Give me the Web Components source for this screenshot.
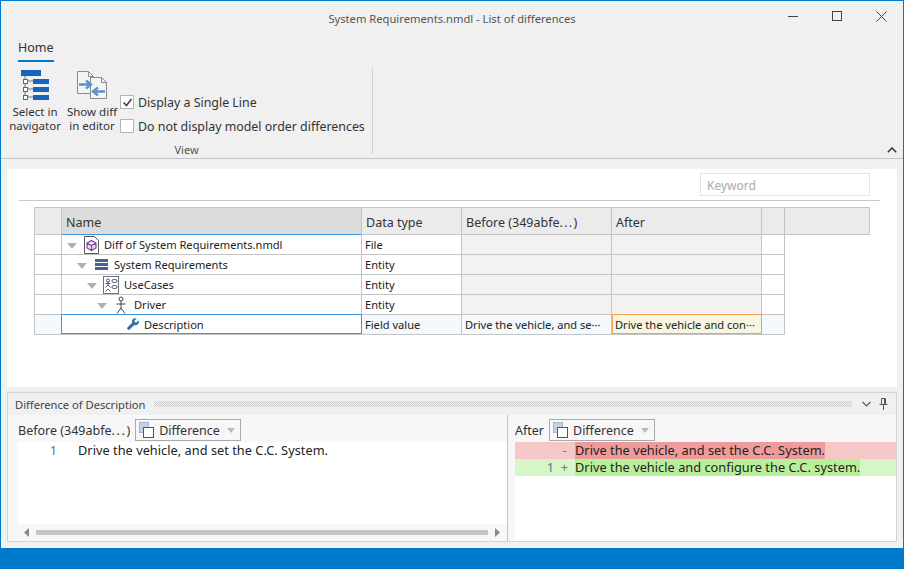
<!DOCTYPE html>
<html><head><meta charset="utf-8"><style>
html,body{margin:0;padding:0;background:#f0f0f0}
body{font-family:"Noto Sans","DejaVu Sans",sans-serif;font-size:12px;color:#222;width:904px;height:569px;overflow:hidden}
</style></head><body>
<app-window></app-window>
<script>
function el(name,html,css){
  customElements.define(name,class extends HTMLElement{
    connectedCallback(){ if(this.shadowRoot)return; const r=this.attachShadow({mode:'open'});
      r.innerHTML='<style>'+css+'</style>'+(typeof html==='function'?html(this):html);}
  });
}
const ICONS={
 file:`<svg width="15" height="18" viewBox="0 0 15 18"><path d="M.5.500h10l4 4v13H.5z" fill="#fff" stroke="#555"/><path d="M7.500 4.500l4.500 2.500v5l-4.500 2.500L3 12V7zM3 7l4.500 2.500L12 7M7.500 9.500v5" fill="#e9dff0" stroke="#7b3fa0" stroke-width="1.200"/></svg>`,
 sys:`<svg width="13" height="11" viewBox="0 0 13 11"><path d="M0 0h13v3H0zM0 4h13v3H0zM0 8h13v3H0z" fill="#4a6285"/></svg>`,
 uc:`<svg width="16" height="18" viewBox="0 0 16 18"><rect x=".5" y=".5" width="15" height="17" fill="#fff" stroke="#5f7590"/><g fill="none" stroke="#445" stroke-width=".9"><circle cx="5" cy="4.500" r="1.500"/><path d="M5 6v3M2.500 7.500h5M5 9l-2.500 2.500M5 9l2.500 2.500"/><path d="M2.500 15.500L5 13l2.500 2.500"/><ellipse cx="11.500" cy="5" rx="2.700" ry="1.600"/><ellipse cx="11.500" cy="11" rx="2.700" ry="1.600"/></g></svg>`,
 actor:`<svg width="10" height="18" viewBox="0 0 10 18"><g fill="none" stroke="#444"><circle cx="5" cy="3" r="2"/><path d="M5 5v7M.5 8h9M5 12l-4 5.500M5 12l4 5.500"/></g></svg>`,
 wrench:`<svg width="12" height="12" viewBox="0 0 12 12"><path d="M11.500 2.300L9.300 4.400 7.700 4.200 7.500 2.600 9.700.5C8.200-.2 6.400.2 5.500 1.500c-.7 1-.8 2.200-.3 3.200L.6 9.300c-.6.600-.6 1.400-.1 1.900l.3.300c.5.500 1.300.5 1.900 0l4.600-4.600c1.100.5 2.300.4 3.300-.3 1.200-.9 1.600-2.800.9-4.300z" fill="#3a6ea8"/></svg>`,
 copy:`<svg width="15" height="16" viewBox="0 0 15 16"><rect x=".5" y=".5" width="9" height="10" fill="#c5d2e6" stroke="#a8b6cc"/><rect x="4.500" y="5.500" width="10" height="10" fill="#fff" stroke="#555"/></svg>`
};

el('title-bar',`<span class="t">System Requirements.nmdl - List of differences</span>
<span class="b"><svg width="11" height="11" viewBox="0 0 11 11"><path d="M0 5.500h10" stroke="#444"/></svg></span>
<span class="b"><svg width="11" height="11" viewBox="0 0 11 11"><rect x=".5" y=".5" width="9" height="9" fill="none" stroke="#444"/></svg></span>
<span class="b"><svg width="11" height="11" viewBox="0 0 11 11"><path d="M.5.500l10 10M10.500.500l-10 10" stroke="#444"/></svg></span>`,
`:host{display:flex;align-items:center;height:35px;color:#555;flex:none}
.t{flex:1;text-align:center;font-size:11.200px;margin-right:-132px;margin-top:-1px}
.b{width:44px;display:flex;justify-content:center;align-items:center;margin-top:-4px}`);

el('ribbon-button',h=>`<slot name="i"></slot><span><slot></slot></span>`,
`:host{display:flex;flex-direction:column;align-items:center;line-height:14px;text-align:center;font-size:11.500px;color:#333;padding-top:3px}
span{display:block;margin-top:3px}`);

el('ribbon-check',h=>`<span class="c">${h.hasAttribute('checked')?'<svg width="11" height="11" viewBox="0 0 11 11"><path d="M1.500 5.500l3 3 5-6.500" fill="none" stroke="#444" stroke-width="1.700"/></svg>':''}</span><slot></slot>`,
`:host{display:flex;align-items:center;gap:4px;height:24px;font-size:12.400px;color:#333;white-space:nowrap}
.c{width:12px;height:12px;background:#fff;border:1px solid #b5b5b5;display:flex;align-items:center;justify-content:center}`);

el('app-ribbon',`<div class="tab"><span>Home</span></div>
<div class="body"><div class="group"><div class="items">
<ribbon-button><svg slot="i" width="30" height="32" viewBox="0 0 30 32"><path d="M1 0h20v6H1z" fill="#1565c0"/><path d="M5 6v21M5 11h8M5 19h8M5 27h8" stroke="#777" fill="none"/><g fill="#fff" stroke="#666"><rect x="3.500" y="9.500" width="4" height="4"/><rect x="3.500" y="17.500" width="4" height="4"/><rect x="3.500" y="25.500" width="4" height="4"/></g><path d="M13 9h16v5H13zM13 17h16v5H13zM13 25h16v5H13z" fill="#1565c0"/></svg>Select in<br>navigator</ribbon-button>
<ribbon-button class="second"><svg slot="i" width="30" height="32" viewBox="0 0 30 32"><path d="M.5 1.500h11l5 5v17H.5z" fill="#f4f4f4" stroke="#8c8c8c"/><path d="M11.500 1.500v5h5" fill="none" stroke="#8c8c8c"/><path d="M13.500 7.500h11l5 5v16h-16z" fill="#f4f4f4" stroke="#8c8c8c"/><path d="M24.500 7.500v5h5" fill="none" stroke="#8c8c8c"/><path d="M2 14.500h11M9 10.500l5 4-5 4" fill="none" stroke="#5b93c9" stroke-width="2.400"/><path d="M28 21.500H17M21 17.500l-5 4 5 4" fill="none" stroke="#5b93c9" stroke-width="2.400"/></svg>Show diff<br>in editor</ribbon-button>
<div class="checks"><ribbon-check checked>Display a Single Line</ribbon-check><ribbon-check>Do not display model order differences</ribbon-check></div>
</div><div class="label">View</div></div></div>
<svg class="up" width="10" height="6" viewBox="0 0 10 6"><path d="M.8 5.200L5 1l4.200 4.200" fill="none" stroke="#333" stroke-width="1.500"/></svg>`,
`:host{display:block;flex:none;height:122px;border-bottom:1px solid #c4c4c4;position:relative;font-size:12px}
.tab{padding-left:17px;height:27px}
.tab span{display:inline-block;height:24px;line-height:23px;border-bottom:2px solid #0078d0;color:#333;font-size:12.500px}
.body{display:flex;padding-top:4px}
.group{width:371px;height:87px;border-right:1px solid #d2d2d2;display:flex;flex-direction:column}
.items{display:flex;flex:1;padding-left:8px}
.second{margin-left:5px}
ribbon-button{width:52px}
.checks{margin-left:2px;padding-top:23px;display:flex;flex-direction:column}
.label{text-align:center;color:#555;font-size:11px;line-height:14px;margin-bottom:-3px}
.up{position:absolute;right:6px;bottom:5px}`);

const cols='27px 300px 100px 150px 150px 23px';
el('grid-head',`<div class="c"></div><div class="c n">Name</div><div class="c">Data type</div><div class="c">Before (349abfe<span class="d">...</span>)</div><div class="c">After</div><div class="c"></div><div class="c f"></div>`,
`:host{display:grid;grid-template-columns:${cols} 1fr;height:28px;background:#ebebeb;border:1px solid #c4c4c4;box-sizing:border-box;font-size:12.500px;color:#333}
.c{border-right:1px solid #c4c4c4;padding-left:4px;line-height:29px;box-sizing:border-box;white-space:nowrap;height:26px}
.d{letter-spacing:1.300px}
.n{background:#dcdcdc;border-bottom:1px solid #3a96dd;height:27px}.f{border:0}`);

el('grid-row',h=>{
 const d=+h.getAttribute('depth'),sel=h.hasAttribute('selected'),ic=h.getAttribute('icon');
 return `<div class="c g"></div>
 <div class="c name" style="padding-left:${5+d*10}px">${sel?'<i class="nt"></i>':'<i class="tri"></i>'}<span class="ic">${ICONS[ic]}</span><span>${h.getAttribute('name')}</span></div>
 <div class="c">${h.getAttribute('type')}</div>
 <div class="c v b">${h.getAttribute('before')||''}</div>
 <div class="c v a">${h.getAttribute('after')||''}</div>
 <div class="c"></div>`},
`:host{display:grid;grid-template-columns:${cols};height:20px;border-left:1px solid #c4c4c4;border-bottom:1px solid #c4c4c4;box-sizing:border-box;font-size:11.100px;color:#222;width:751px}
:host([selected]){background:#f3f9fd}
.c{border-right:1px solid #c4c4c4;padding-left:3px;line-height:19px;box-sizing:border-box;white-space:nowrap;overflow:hidden;height:19px;min-width:0}
.v{background:#f2f2f2}
:host([selected]) .v{background:transparent}
:host([selected]) .a{background:#f6f6e2;outline:1px solid #f3a14c;outline-offset:-1px;height:20px;margin-top:-1px;line-height:21px}
:host([selected]) .name{outline:1px solid #3a96dd;outline-offset:-1px;height:20px;margin-top:-1px;background:#fff;margin-left:-1px}
.name{display:flex;align-items:center}
.tri{flex:none;width:0;height:0;border:5px solid transparent;border-top:6px solid #b0b0b0;border-bottom:0;margin-right:5px;margin-top:3px}
.nt{flex:none;width:10px;margin-right:6px}
.ic{flex:none;width:18px;height:18px;box-sizing:border-box;display:flex;align-items:center;justify-content:center;margin-right:4px}
:host([selected]) .ic{justify-content:flex-end;padding-right:1px}`);

el('search-box',`<slot></slot>`,
`:host{display:block;width:170px;height:23px;box-sizing:border-box;border:1px solid #e4e4e4;color:#aaa;padding-left:6px;line-height:23px;font-size:12px;background:#fff}`);

el('diff-grid',`<div class="top"><search-box>Keyword</search-box></div><div class="hr"></div><div class="wrap"><grid-head></grid-head>
<grid-row depth="0" icon="file" name="Diff of System Requirements.nmdl" type="File"></grid-row>
<grid-row depth="1" icon="sys" name="System Requirements" type="Entity"></grid-row>
<grid-row depth="2" icon="uc" name="UseCases" type="Entity"></grid-row>
<grid-row depth="3" icon="actor" name="Driver" type="Entity"></grid-row>
<grid-row selected depth="4" icon="wrench" name="Description" type="Field value" before="Drive the vehicle, and se···" after="Drive the vehicle and con···"></grid-row></div>`,
`:host{display:block;background:#fff;height:218px;margin:10px 6px 0;padding:4px 17px 0 12px;box-sizing:border-box;flex:none}
.top{display:flex;justify-content:flex-end;padding-right:10px}
.hr{height:1px;background:#c8c8c8;margin-top:4px}
.wrap{margin:6px 10px 0 15px}`);

el('drop-down',`<span class="i">${ICONS.copy}</span><slot></slot><i></i>`,
`:host{display:flex;align-items:center;width:106px;height:22px;box-sizing:border-box;border:1px solid #aaa;padding-left:3px;color:#333;font-size:12.500px;flex:none}
.i{display:flex;margin-right:5px}
i{width:0;height:0;border:4.500px solid transparent;border-top:5px solid #bbb;border-bottom:0;margin-left:auto;margin-right:5px}`);

el('diff-pane',h=>`<div class="bar"><span>${h.getAttribute('label')}</span><drop-down>Difference</drop-down></div><div class="ed"><slot></slot></div><slot name="scroll"></slot>`,
`:host{display:flex;flex-direction:column;min-width:0;background:#f7f7f7}
.bar{display:flex;align-items:center;gap:5px;height:27px;box-sizing:border-box;padding:4px 0 1px;flex:none;font-size:12.500px;color:#333;white-space:nowrap}
.ed{flex:1;background:#fff}`);

el('diff-line',h=>`<span class="n">${h.getAttribute('n')||''}</span><span class="m">${h.getAttribute('m')||''}</span><span class="t"><slot></slot></span>`,
`:host{display:flex;height:17px;line-height:17px;font-size:12.750px;letter-spacing:.03px;color:#222;white-space:pre}
.n{width:39px;text-align:right;color:#4a7d99;flex:none}.m{width:21px;text-align:center;color:#777;flex:none}
:host([kind=del]){background:#f6c7c7}:host([kind=del]) .t{background:#ef9b9b}
:host([kind=add]){background:#d6f6c8}:host([kind=add]) .t{background:#b9ef9b}`);

el('h-scroll',`<svg width="5" height="9" viewBox="0 0 5 9"><path d="M5 0v9L0 4.500z" fill="#888"/></svg><div></div><svg width="5" height="9" viewBox="0 0 5 9"><path d="M0 0v9l5-4.500z" fill="#888"/></svg>`,
`:host{display:flex;align-items:center;height:17px;padding:0 7px 0 6px;gap:7px;flex:none;background:#f7f7f7}
div{flex:1;height:5px;background:#c6c6c6}`);

el('detail-panel',`<div class="head"><span>Difference of Description</span><i class="dots"></i>
<svg width="9" height="6" viewBox="0 0 9 6"><path d="M.5 1l4 4 4-4" fill="none" stroke="#555" stroke-width="1.200"/></svg>
<svg class="pin" width="9" height="12" viewBox="0 0 9 12"><path d="M2.500.5h4v6h-4zM.5 6.500h8M4.500 7v5" fill="none" stroke="#555"/><path d="M5 1h1.500v5H5z" fill="#555"/></svg></div>
<div class="body"><diff-pane class="l" label='Before (349abfe<span style="letter-spacing:1.600px">...</span>)'><diff-line n="1">Drive the vehicle, and set the C.C. System.</diff-line><h-scroll slot="scroll"></h-scroll></diff-pane>
<diff-pane class="r" label="After"><diff-line kind="del" m="-">Drive the vehicle, and set the C.C. System.</diff-line><diff-line kind="add" n="1" m="+">Drive the vehicle and configure the C.C. system.</diff-line></diff-pane></div>`,
`:host{display:flex;flex-direction:column;height:150px;margin:5px 6px 0;border:1px solid #d4d4d4;box-sizing:border-box;flex:none;background:#f7f7f7}
.head{display:flex;align-items:center;height:22px;background:#f0f0f0;padding:0 8px 0 7px;color:#444;font-size:11.150px;flex:none}
.dots{flex:1;height:6px;margin:0 10px 0 9px;background:conic-gradient(#cfcfcf 25%,transparent 0 50%,#cfcfcf 0 75%,transparent 0) 0 0/2px 2px}
.pin{margin-left:8px}
.body{flex:1;display:grid;grid-template-columns:500px 1fr;min-height:0}
.l{padding-left:10px;border-right:1px solid #c4c4c4;box-sizing:border-box}
.r{padding-left:7px}`);

el('status-bar','',`:host{display:block;position:absolute;left:-1px;right:-1px;bottom:0;height:21px;background:#007acc}`);

el('app-window',`<title-bar></title-bar><app-ribbon></app-ribbon><diff-grid></diff-grid><detail-panel></detail-panel><status-bar></status-bar>`,
`:host{display:flex;flex-direction:column;width:904px;height:569px;box-sizing:border-box;border:1px solid #0078d0;border-bottom:0;background:#f0f0f0;position:relative}`);
</script>
</body></html>
